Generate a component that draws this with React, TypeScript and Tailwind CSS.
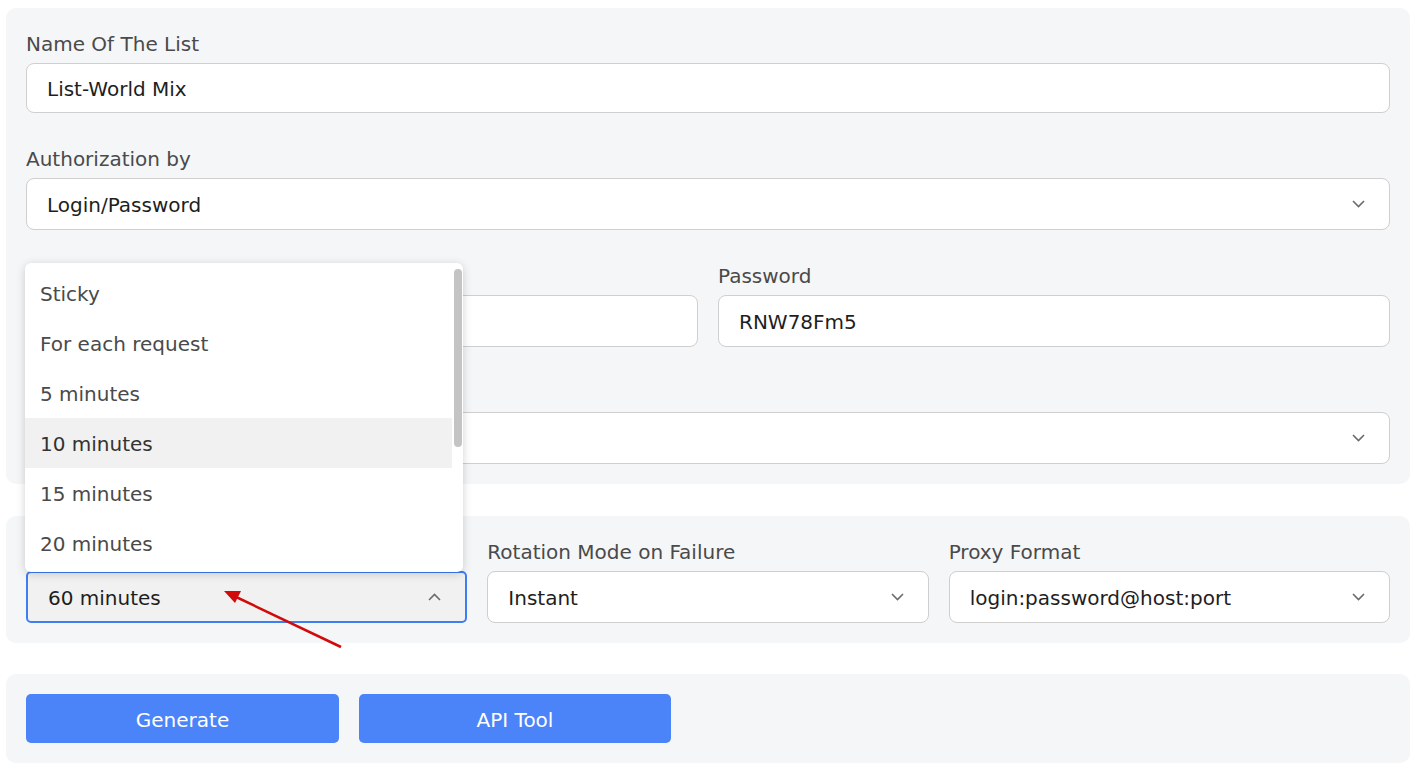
import React from "react";

const font = { fontFamily: '"DejaVu Sans", Verdana, sans-serif' };

function Chevron({ up = false }: { up?: boolean }) {
  return (
    <svg width="13" height="8" viewBox="0 0 13 8" className="shrink-0">
      <polyline
        points={up ? "1,7 6.5,1.5 12,7" : "1,1 6.5,6.5 12,1"}
        fill="none"
        stroke="#6b6b6b"
        strokeWidth="1.6"
      />
    </svg>
  );
}

function Label({ children }: { children?: React.ReactNode }) {
  return <div className="text-[20px] leading-[32px] mb-[5px] text-[#4a4a4a] h-[30px]">{children}</div>;
}

function TextBox({ value, first = false }: { value?: string; first?: boolean }) {
  return (
    <div
      className={
        (first ? "h-[50px] " : "h-[52px] ") +
        "rounded-lg border border-[#cfcfcf] bg-white px-5 pt-[2px] flex items-center text-[20px] text-[#1e1e1e]"
      }
    >
      {value}
    </div>
  );
}

function Select({ value }: { value?: string }) {
  return (
    <div className="h-[52px] rounded-lg border border-[#cfcfcf] bg-white pl-5 pr-6 flex items-center justify-between text-[20px] text-[#1e1e1e]">
      <span className="pt-[2px]">{value}</span>
      <Chevron />
    </div>
  );
}

const options = ["Sticky", "For each request", "5 minutes", "10 minutes", "15 minutes", "20 minutes"];

export default function App() {
  return (
    <div className="relative min-h-[771px] bg-white pt-2 pl-[6px] pr-[12px] pb-2" style={font}>
      {/* Panel 1 */}
      <div className="rounded-[10px] bg-[#f5f6f8] px-5 pt-5 pb-5">
        <Label>Name Of The List</Label>
        <TextBox value="List-World Mix" first />
        <div className="mt-[30px]">
          <Label>Authorization by</Label>
          <Select value="Login/Password" />
        </div>
        <div className="mt-[30px] grid grid-cols-2 gap-5">
          <div>
            <Label>Login</Label>
            <TextBox value="" />
          </div>
          <div>
            <Label>Password</Label>
            <TextBox value="RNW78Fm5" />
          </div>
        </div>
        <div className="mt-[30px]">
          <Label>Country</Label>
          <Select value="" />
        </div>
      </div>

      {/* Panel 2 */}
      <div className="mt-8 rounded-[10px] bg-[#f5f6f8] px-5 pt-5 pb-5 grid grid-cols-3 gap-5">
        <div>
          <Label>Rotation</Label>
          <div className="relative">
            <div className="h-[52px] rounded-[5px] border-2 border-[#3d7ef5] bg-[#f1f1f1] pl-5 pr-6 flex items-center justify-between text-[20px] text-[#1e1e1e]">
              <span className="pt-[2px]">60 minutes</span>
              <Chevron up />
            </div>
            {/* Dropdown overlay */}
            <div className="absolute left-[-1px] bottom-[51px] w-[438px] h-[309px] rounded-md bg-white shadow-[0_2px_10px_rgba(0,0,0,0.18)] pt-[5px] overflow-hidden flex">
              <div className="flex-1">
                {options.map((o) => (
                  <div
                    key={o}
                    className={
                      o === "10 minutes"
                        ? "h-[50px] pl-[15px] pt-[2px] flex items-center text-[20px] text-[#333] bg-[#f1f1f1]"
                        : "h-[50px] pl-[15px] pt-[2px] flex items-center text-[20px] text-[#4a4a4a]"
                    }
                  >
                    {o}
                  </div>
                ))}
              </div>
              <div className="w-[11px] pt-[1px] flex justify-center">
                <div className="w-[8px] h-[178px] rounded-full bg-[#c4c4c4]" />
              </div>
            </div>
          </div>
        </div>
        <div>
          <Label>Rotation Mode on Failure</Label>
          <Select value="Instant" />
        </div>
        <div>
          <Label>Proxy Format</Label>
          <Select value="login:password@host:port" />
        </div>
      </div>

      {/* Panel 3 */}
      <div className="mt-[31px] rounded-[10px] bg-[#f5f6f8] p-5 flex gap-5">
        <button className="w-[313px] h-[49px] pt-[2px] rounded-[5px] bg-[#4a84f8] text-white text-[20px]">Generate</button>
        <button className="w-[312px] h-[49px] pt-[2px] rounded-[5px] bg-[#4a84f8] text-white text-[20px]">API Tool</button>
      </div>

      {/* Red annotation arrow */}
      <svg className="absolute left-0 top-0 pointer-events-none" width="1422" height="771">
        <line x1="341" y1="647" x2="234" y2="596" stroke="#d10a0a" strokeWidth="2.5" />
        <polygon points="224,591 241,591 235,603" fill="#d10a0a" />
      </svg>
    </div>
  );
}
